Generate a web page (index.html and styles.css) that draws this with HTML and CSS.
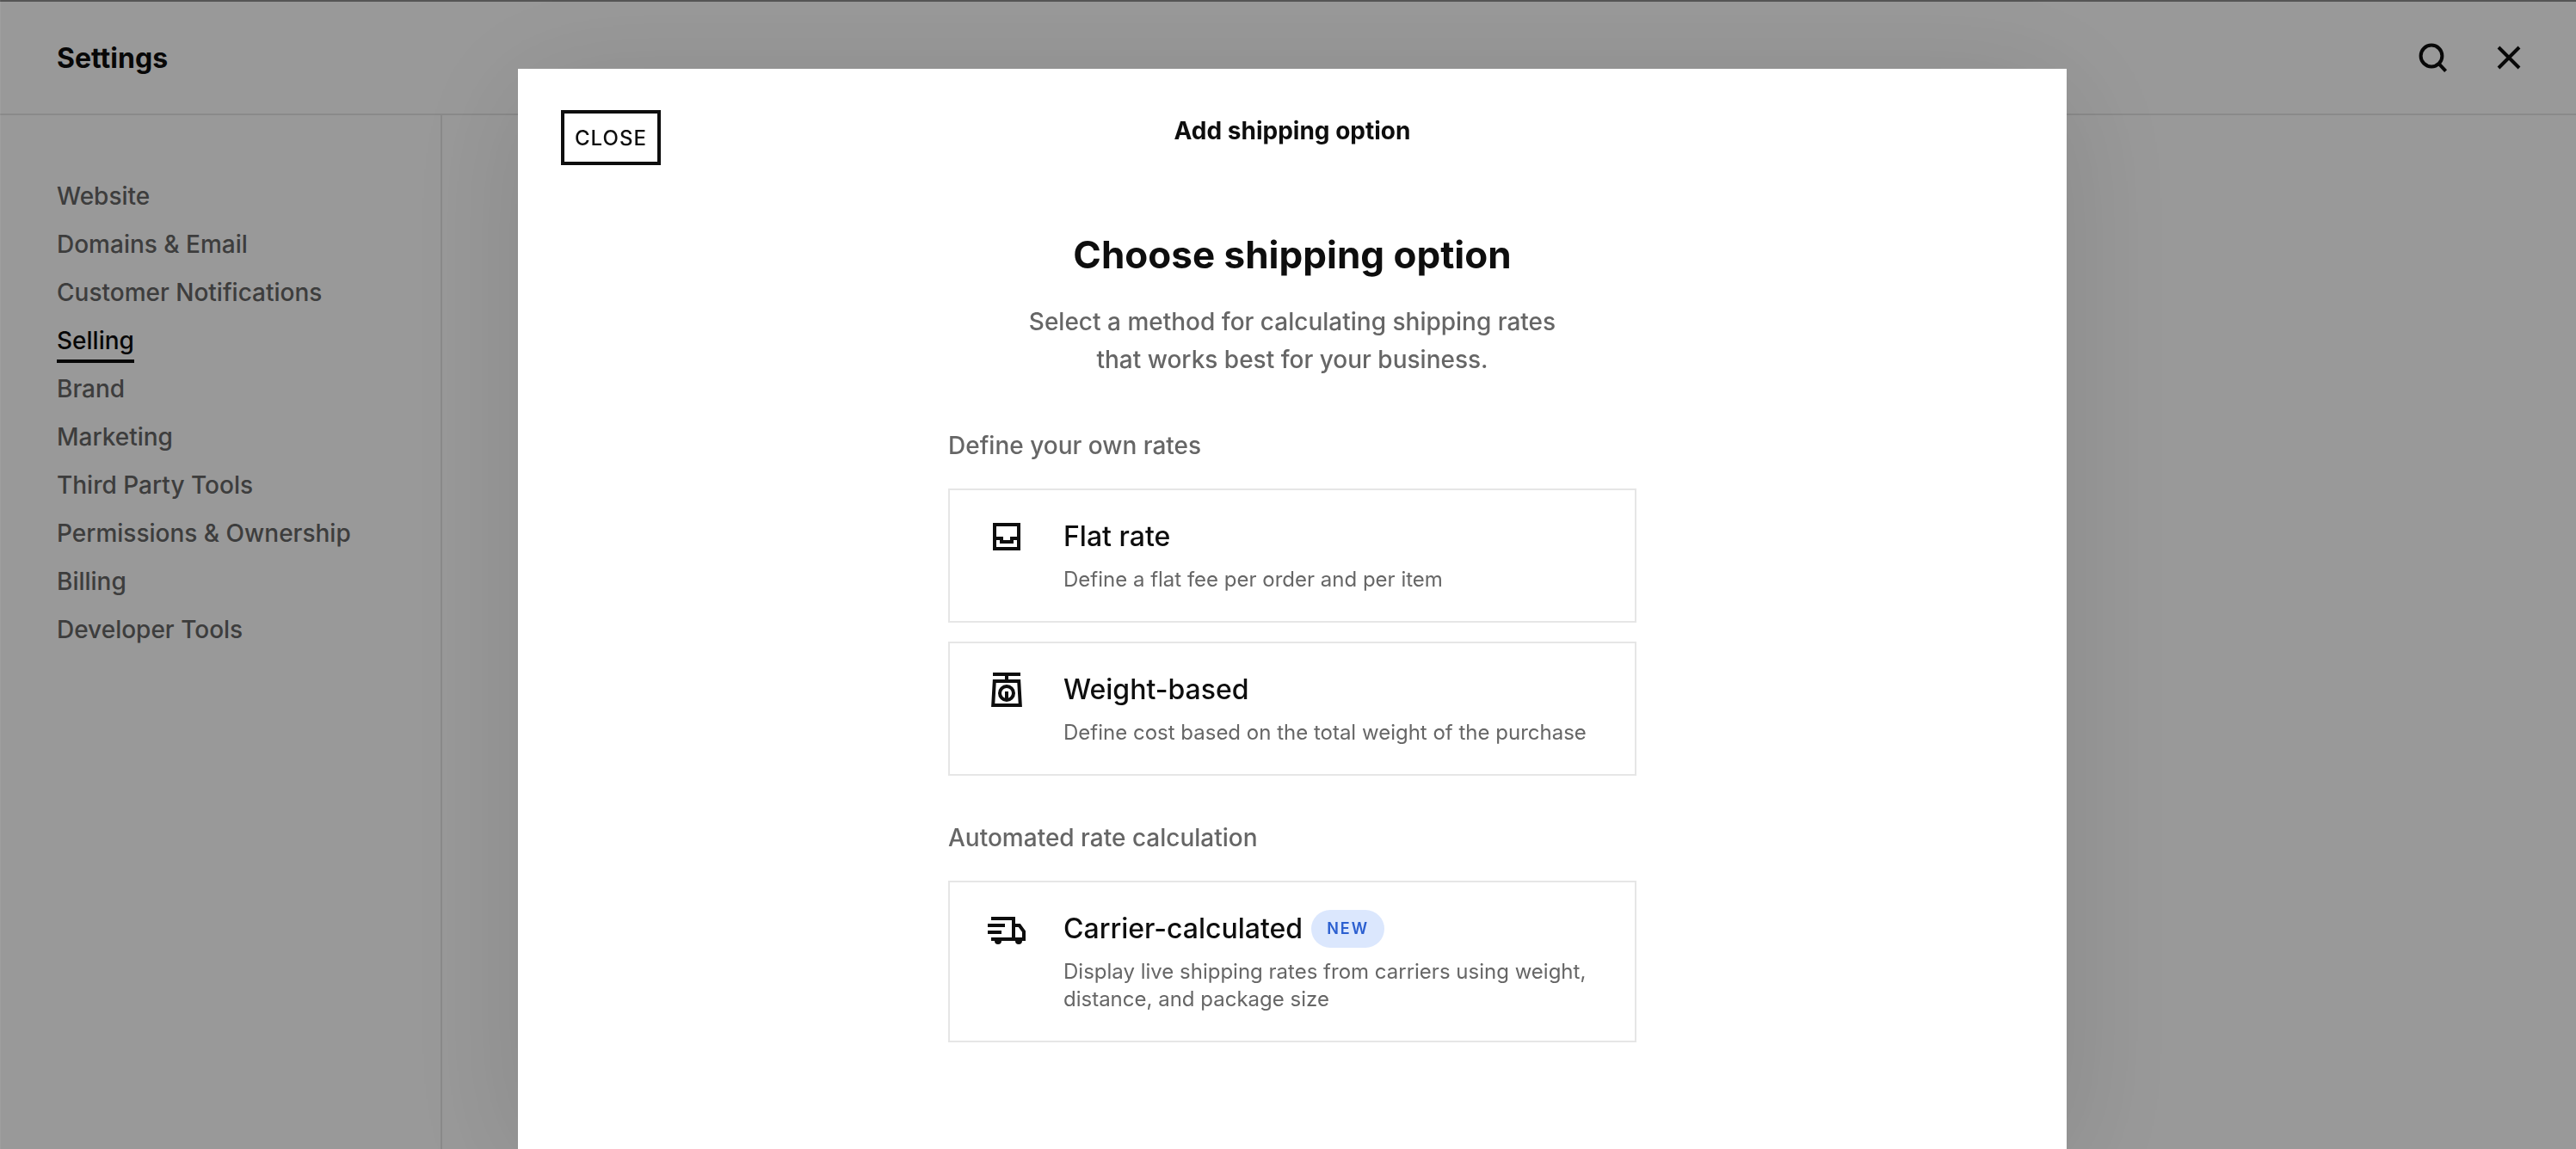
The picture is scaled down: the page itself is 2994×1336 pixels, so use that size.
FILE: index.html
```html
<!DOCTYPE html>
<html lang="en">

<head>
    <meta charset="UTF-8">
    <meta name="viewport" content="width=device-width, initial-scale=1.0">
    <title>Settings</title>
    <link rel="stylesheet" href="styles.css">
</head>

<body>

    <div class="page">
        <header class="page-header">
            <h1>Settings</h1>
            <div class="page-actions">
                <button type="button" class="icon-btn" aria-label="Search">
                    <svg class="icon" viewBox="0 0 24 24">
                        <circle cx="11" cy="11" r="6.2" />
                        <path d="M15.2 15.4l4.1 4.4" />
                    </svg>
                </button>
                <button type="button" class="icon-btn" aria-label="Close settings">
                    <svg class="icon" viewBox="0 0 24 24">
                        <path d="M6 6l12 12M18 6L6 18" />
                    </svg>
                </button>
            </div>
        </header>

        <div class="page-body">
            <nav class="sidebar">
                <a href="#">Website</a>
                <a href="#">Domains &amp; Email</a>
                <a href="#">Customer Notifications</a>
                <a href="#" class="active">Selling</a>
                <a href="#">Brand</a>
                <a href="#">Marketing</a>
                <a href="#">Third Party Tools</a>
                <a href="#">Permissions &amp; Ownership</a>
                <a href="#">Billing</a>
                <a href="#">Developer Tools</a>
            </nav>
        </div>
    </div>

    <!-- Add shipping option modal -->
    <div class="overlay">
        <div class="modal" role="dialog" aria-labelledby="modal-title">
            <div class="modal-header">
                <button type="button" class="close-btn">CLOSE</button>
                <h2 id="modal-title">Add shipping option</h2>
            </div>

            <div class="modal-content">
                <h3 class="heading">Choose shipping option</h3>
                <p class="subheading">Select a method for calculating shipping rates that works best for your business.</p>

                <section class="group">
                    <h4>Define your own rates</h4>
                    <button type="button" class="option">
                        <svg class="icon" viewBox="0 0 24 24">
                            <path d="M5 5h14v14H5z" />
                            <path d="M6 13h3v2h6v-2h3" />
                        </svg>
                        <span class="option-text">
                            <span class="option-title">Flat rate</span>
                            <span class="option-desc">Define a flat fee per order and per item</span>
                        </span>
                    </button>
                    <button type="button" class="option">
                        <svg class="icon" viewBox="0 0 24 24">
                            <path d="M4 3h16M12 3v4" />
                            <path d="M4.9 7h14.2l.8 14H4.1z" />
                            <circle cx="12" cy="14" r="4" />
                            <path d="M12 13v5" />
                        </svg>
                        <span class="option-text">
                            <span class="option-title">Weight-based</span>
                            <span class="option-desc">Define cost based on the total weight of the purchase</span>
                        </span>
                    </button>
                </section>

                <section class="group">
                    <h4>Automated rate calculation</h4>
                    <button type="button" class="option">
                        <svg class="icon" viewBox="0 0 24 24">
                            <path d="M3 6h13v12M1 10h10M1 14h8M3 18h19v-4.4L19.4 10H16" />
                            <path class="wheel" d="M5 19h4a2 2 0 0 1-4 0zM17 19h4a2 2 0 0 1-4 0z" />
                        </svg>
                        <span class="option-text">
                            <span class="option-title">Carrier-calculated <span class="badge">NEW</span></span>
                            <span class="option-desc">Display live shipping rates from carriers using weight, distance, and package size</span>
                        </span>
                    </button>
                </section>
            </div>
        </div>
    </div>

</body>

</html>
```
FILE: styles.css
```css
* {
    box-sizing: border-box;
}

body {
    font-family: Inter, "Liberation Sans", sans-serif;
    font-size: 28px;
    color: #0e0e0e;
    background-color: #fff;
    margin: 0;
}

h1, h2, h3, h4, p {
    margin: 0;
}

button {
    font-family: inherit;
    color: inherit;
    background: none;
    border: none;
    padding: 0;
    cursor: pointer;
}

.icon {
    display: block;
    flex: none;
    width: 48px;
    height: 48px;
    fill: none;
    stroke: currentColor;
    stroke-width: 2;
}

.icon .wheel {
    fill: currentColor;
    stroke: none;
}

/* Settings page */
.page {
    display: flex;
    flex-direction: column;
    height: 100vh;
    border-top: 2px solid #8e8e8e;
}

.page-header {
    display: flex;
    justify-content: space-between;
    align-items: center;
    height: 132px;
    padding: 0 54px 0 66px;
    border-bottom: 2px solid #e6e6e6;
}

.page-header h1 {
    font-size: 32px;
    font-weight: 700;
}

.page-actions {
    display: flex;
    gap: 40px;
}

.page-body {
    display: flex;
    flex: 1;
}

.sidebar {
    display: flex;
    flex-direction: column;
    align-items: flex-start;
    gap: 8px;
    width: 514px;
    padding: 72px 66px;
    border-right: 2px solid #e6e6e6;
}

.sidebar a {
    color: #666;
    font-weight: 500;
    line-height: 44px;
    text-decoration: none;
    white-space: nowrap;
    border-bottom: 4px solid transparent;
}

.sidebar a.active {
    color: #0e0e0e;
    border-bottom-color: #0e0e0e;
}

/* Modal */
.overlay {
    position: fixed;
    inset: 0;
    display: flex;
    justify-content: center;
    padding: 80px 0 0 9px;
    background-color: rgba(0, 0, 0, 0.4);
    border-left: 1px solid rgba(255, 255, 255, 0.05);
}

.modal {
    width: 100%;
    max-width: 1800px;
    background-color: #fff;
    box-shadow: 0 20px 140px rgba(0, 0, 0, 0.12);
}

.modal-header {
    display: grid;
    grid-template-columns: 1fr auto 1fr;
    align-items: start;
    padding: 48px 50px 0;
}

.modal-header h2 {
    font-size: 28px;
    font-weight: 700;
    line-height: 48px;
}

.close-btn {
    justify-self: start;
    height: 64px;
    padding: 0 12px;
    border: 4px solid #0e0e0e;
    font-size: 24px;
    font-weight: 500;
    letter-spacing: 1px;
}

.modal-content {
    max-width: 800px;
    margin: 0 auto;
    padding-top: 76px;
}

.heading {
    font-size: 44px;
    font-weight: 700;
    line-height: 56px;
    text-align: center;
}

.subheading {
    max-width: 640px;
    margin: 28px auto 56px;
    color: #666;
    font-weight: 500;
    line-height: 44px;
    text-align: center;
}

.group {
    display: flex;
    flex-direction: column;
    gap: 22px;
    margin-bottom: 50px;
}

.group h4 {
    margin-bottom: 6px;
    color: #666;
    font-size: 28px;
    font-weight: 500;
    line-height: 44px;
}

.option {
    display: flex;
    gap: 42px;
    padding: 30px 42px 32px;
    border: 2px solid #e6e6e6;
    text-align: left;
}

.option-text {
    display: flex;
    flex-direction: column;
    gap: 10px;
}

.option-title {
    display: flex;
    align-items: center;
    gap: 10px;
    font-size: 32px;
    font-weight: 500;
    line-height: 48px;
}

.option-desc {
    color: #666;
    font-size: 24px;
    line-height: 32px;
}

.badge {
    padding: 0 18px;
    border-radius: 22px;
    background-color: #dbe7fd;
    color: #2b5fd0;
    font-size: 18px;
    font-weight: 600;
    letter-spacing: 2px;
    line-height: 44px;
}
```
